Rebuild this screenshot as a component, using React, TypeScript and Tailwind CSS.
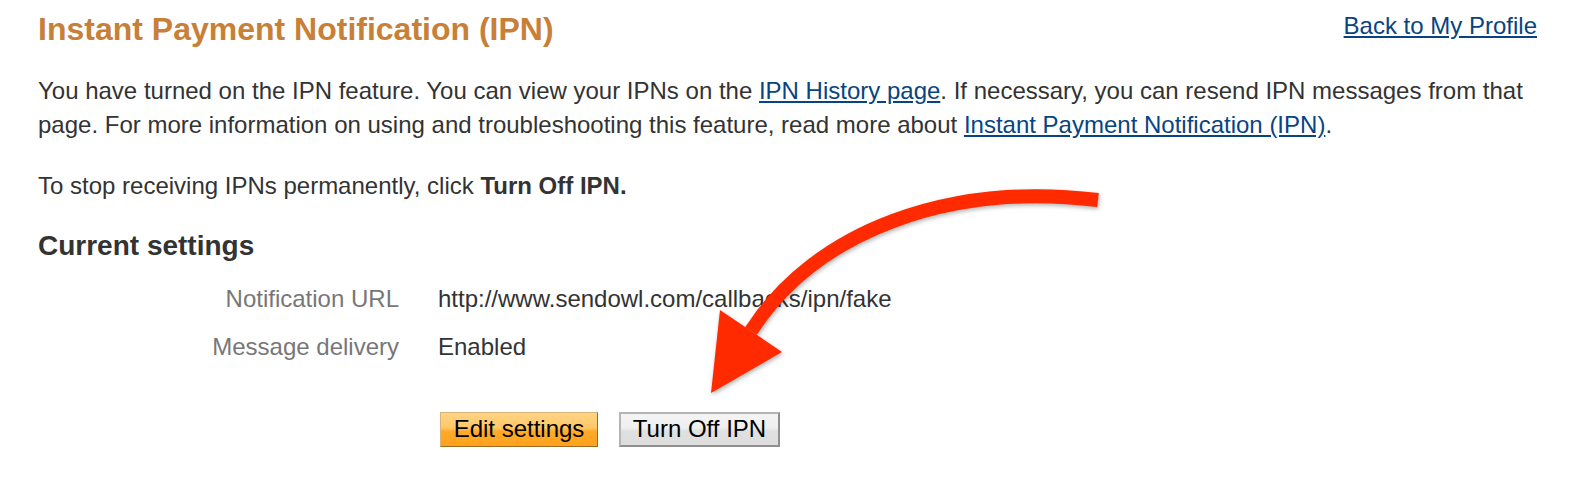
import React from 'react';

const Arrow = () => (
  <svg
    className="absolute left-0 top-0 pointer-events-none drop-shadow-[1px_2px_2px_rgba(0,0,0,0.3)]"
    width="1588"
    height="500"
    viewBox="0 0 1588 500">
    <path
      d="M 1098 200 C 950 182 816 230 751 331"
      fill="none"
      stroke="#ff2a00"
      strokeWidth="14"
    />
    <polygon points="720,310 782,352 711,393" fill="#ff2a00" />
  </svg>
);

const App = () => {
  return (
    <div className="relative w-full min-h-[500px] bg-white pl-[38px] pr-[51px] pt-[10px] font-['Liberation_Sans',Arial,sans-serif] text-[24px] text-[#333333]">
      <div className="flex justify-between items-start">
        <h1 className="text-[32px] leading-[38px] font-bold text-[#c88039]">
          Instant Payment Notification (IPN)
        </h1>
        <a href="#" className="mt-[2px] leading-[28px] text-[#084482] underline">
          Back to My Profile
        </a>
      </div>

      <p className="mt-[26px] leading-[34px]">
        You have turned on the IPN feature. You can view your IPNs on the{' '}
        <a href="#" className="text-[#084482] underline">
          IPN History page
        </a>
        . If necessary, you can resend IPN messages from that
        <br />
        page. For more information on using and troubleshooting this feature, read more about{' '}
        <a href="#" className="text-[#084482] underline">
          Instant Payment Notification (IPN)
        </a>
        .
      </p>

      <p className="mt-[28px] leading-[31.5px]">
        To stop receiving IPNs permanently, click <b>Turn Off IPN.</b>
      </p>

      <h2 className="mt-[27px] text-[28px] leading-[34px] font-bold">Current settings</h2>

      <div className="mt-[22px] grid grid-cols-[361px_1fr] gap-x-[39px] gap-y-[20px] leading-[28px]">
        <div className="text-right text-[#777777]">Notification URL</div>
        <div>http://www.sendowl.com/callbacks/ipn/fake</div>
        <div className="text-right text-[#777777]">Message delivery</div>
        <div>Enabled</div>
      </div>

      <div className="mt-[51px] ml-[402px] flex gap-[21px]">
        <button className="h-[35px] w-[158px] border border-t-[#d8b47c] border-l-[#d8b47c] border-b-[#9a6a22] border-r-[#9a6a22] bg-[linear-gradient(to_bottom,#ffd485_0%,#ffc866_45%,#ffaa2a_55%,#ffa21c_100%)] text-[24px] leading-[28px] text-black">
          Edit settings
        </button>
        <button className="h-[35px] w-[161px] border-2 border-t-[#b5b5b5] border-l-[#b5b5b5] border-b-[#8f8f8f] border-r-[#8f8f8f] bg-[linear-gradient(to_bottom,#f4f4f4_0%,#efefef_45%,#e0e0e0_55%,#dddddd_100%)] text-[24px] leading-[28px] text-black">
          Turn Off IPN
        </button>
      </div>

      <Arrow />
    </div>
  );
};

export default App;
